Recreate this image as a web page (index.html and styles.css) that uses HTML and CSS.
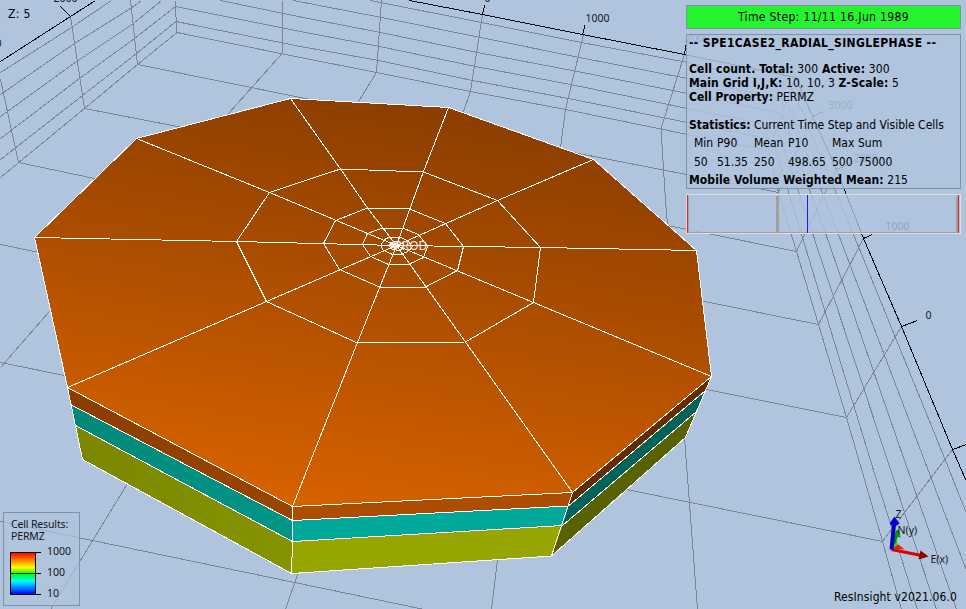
FILE: index.html
```html
<!DOCTYPE html>
<html lang="en">
<head>
<meta charset="utf-8">
<title>ResInsight</title>
<link rel="stylesheet" href="styles.css">
</head>
<body>
<main class="view">
<svg class="scene" width="966" height="609" viewBox="0 0 966 609">
  <defs>
    <linearGradient id="top" gradientUnits="userSpaceOnUse" x1="440" y1="105" x2="370" y2="510">
      <stop offset="0" stop-color="#8b3e00"/><stop offset=".37" stop-color="#a54a00"/><stop offset="1" stop-color="#d56100"/>
    </linearGradient>
    <linearGradient id="olive" x1="0" y1="0" x2="1" y2="0"><stop offset="0" stop-color="#7c8600"/><stop offset="1" stop-color="#859400"/></linearGradient>
    <linearGradient id="rust" x1="0" y1="0" x2="1" y2="0"><stop offset="0" stop-color="#8b3d00"/><stop offset="1" stop-color="#9a4500"/></linearGradient>
    <linearGradient id="teal" x1="0" y1="0" x2="1" y2="0"><stop offset="0" stop-color="#008878"/><stop offset="1" stop-color="#009688"/></linearGradient>
  </defs>
  <g transform="translate(.5 .5)">
  <g class="grid">
    <path d="M0 72L71 27L111 0M0 94L74 43L131.500 7L141 0M0 116L76 61L133 23L161 0M0 138L79 78L134 38L175 6M0 159L82 95L136 53L175.500 21M0 177L84 108L137 64L176.500 32"/>
    <path d="M0 79L18 162M70 16L84 108M130 0L137 64M174.500 0L176.500 32"/>
    <path d="M370 0L481 22L581 42L687 62L791 86M293 0L381 17L480 37L579 57L687 78L786 100M220 0L300 16.500L380 32L477 52L577 71L687 93L781 113M175 6L300 31L379 46L475 66L575 85L687 108L776 126M175.500 21L300 46L378 60L472 80L568 98L687 122L772 139M176.500 32L300 57L376 72L470 91L565 109L687 134L768 150"/>
    <path d="M281.500 0V53L229 112L48 312L0 367M381 0L376 72L358 101L127 483L50 609M482 14L470 91L463 111L297 574L285 609M583 34L565 109L560 147L497 559L491 609M684 54L660.500 128L665 200L684 437L697 609"/>
    <path d="M137 64L300 97L573 152L778 192M84 108L177 126L796 251M18 162L94 178L818 324M0 244L706 389L846 417M0 362L626 489L882 541M0 521L92 540L294 582L424 609"/>
    <path d="M795 77L768 150L778 192L796 251L818 324L846 417L882 541L901 609M772 139L801 234L870 460L917 609M776 126L812.500 234L887 460L936 609M781 113L825.500 234L904 460L956 609M786 100L838 234L924 460L966 570M791 86L853 234L945 460L966 513"/>
    <path d="M812 116L778 192M836 169L796 251M863 238L818 324M901 326L846 417M952 449L882 541"/>
  </g>
  <g class="axis">
    <path d="M0 61L70 16L95 0M60 6L70 16M409 0L482 14L582 34L684 54L795 77M482 14L484 5M582 34L584.500 25M684 54L686 41M795 77L812 116L836 169L863 238L901 326L952 449L966 481M812 116L823 111M836 169L846 165M863 238L872 234M901 326L917 320M952 449L966 444"/>
  </g>
  <g class="tick">
    <text x="53" y="1">2000</text><text x="-5" y="46">0</text><text x="484" y="1">0</text>
    <text x="585" y="21">1000</text><text x="685" y="41">2000</text>
    <text x="828" y="108">3000</text><text x="853" y="161">2000</text><text x="885" y="229">1000</text><text x="925" y="318">0</text>
  </g>
  <polygon fill="url(#rust)" points="67,387 292,506 292,520 70,404"/>
  <polygon fill="url(#teal)" points="70,404 292,520 292,541 75,425"/>
  <polygon fill="url(#olive)" points="75,425 292,541 291,573 82,459"/>
  <polygon fill="#ad4d00" points="292,506 572,492 568,505.500 292,520"/>
  <polygon fill="#00a99a" points="292,520 568,505.500 562,525 292,541"/>
  <polygon fill="#96a500" points="292,541 562,525 551,555.500 291,573"/>
  <polygon fill="#642c00" points="572,492 711,376 705,390 568,505.500"/>
  <polygon fill="#00635a" points="568,505.500 705,390 696,411 562,525"/>
  <polygon fill="#596200" points="562,525 696,411 685,437 551,555.500"/>
  <polygon fill="url(#top)" points="290,98 448,107 593,159 696,250 711,376 572,492 292,506 67,387 34,237 136,138"/>
  <g class="mesh">
    <polygon points="290,98 448,107 593,159 696,250 711,376 572,492 292,506 67,387 34,237 136,138"/>
    <polygon points="340,168.500 423,171.500 497,200 540,247 533,302 465,341.500 357,342.500 266,301 236,241 269,192"/>
    <polygon points="367,207.500 409,208.500 445,223 463,246 457,270 425,286.500 379,286.500 339,269 323,243 335,220"/>
    <polygon points="382,227.500 402,227.500 418,234 427,246 423,257 409,263.500 387,263.500 370,256 362,244 367,233"/>
    <polygon points="389,236.500 399,236.500 407,240 412,246 408,251 401,253.500 391,253.500 383,250 380,245 384,239"/>
    <polygon points="393,241 398,241 403,244 402,248 398,250 392,249 388,245"/>
    <path d="M290 98L340 168.500L367 207.500L396 245L465 341.500L572 492M448 107L423 171L396 245L357 342L292 506M593 159L497 200L396 245L266 301L67 387M696 250L540 247L396 245L236 241L34 237M711 376L533 302L396 245L269 192L136 138"/>
    <path d="M70 404L292 520L568 505.500L705 390M75 425L292 541L562 525L696 411M67 387L82 459L291 573L551 555.500L685 437L711 376M292 506V541L291 573M572 492L551 555.500"/>
  </g>
  <text class="well" x="394" y="249.500">PROD</text>
  <path fill="#f4f1ea" d="M390 243h2v-1h2v2h2v-2h2v3h-1v3h-2v1h-2v-2h-3z"/>
  <g>
    <path d="M893 546L897 530" stroke="#008500" stroke-width="3"/><path fill="#009b00" d="M894 536L898 528L900 537Z"/>
    <path fill="#00ee20" d="M891 548L896 541L899 547Z"/>
    <path fill="#fa1414" d="M892 548L898 544L904 549Z"/>
    <path d="M891 549L921 555" stroke="#dc0000" stroke-width="3"/><path fill="#880000" d="M920 550L928 556L918 559Z"/>
    <path d="M891 549L893.500 524" stroke="#0000bd" stroke-width="4"/><path fill="#0000d0" d="M894 516L899 523Q894 528 889 523Z"/>
    <g class="tick"><text x="895" y="517">Z</text><text x="897" y="533">N(y)</text><text x="930" y="562">E(x)</text></g>
  </g>
  </g>
</svg>
<div class="zscale">Z: 5</div>
<aside class="side">
  <div class="step">Time Step: 11/11 16.Jun 1989</div>
  <section class="info">
    <h1>-- SPE1CASE2_RADIAL_SINGLEPHASE --</h1>
    <p class="count"><b>Cell count. Total:</b> 300 <b>Active:</b> 300</p>
    <p class="dims"><b>Main Grid I,J,K:</b> 10, 10, 3 <b>Z-Scale:</b> 5</p>
    <p><b>Cell Property:</b> PERMZ</p>
    <p class="gap"><b>Statistics:</b> Current Time Step and Visible Cells</p>
    <div class="stats">
      <span>Min</span><span>P90</span><span>Mean</span><span>P10</span><span>Max</span><span>Sum</span>
      <span>50</span><span>51.35</span><span>250</span><span>498.65</span><span>500</span><span>75000</span>
    </div>
    <p class="mean"><b>Mobile Volume Weighted Mean:</b> 215</p>
  </section>
  <svg class="hist" width="275" height="40" viewBox="0 0 275 40">
    <rect class="plot" x=".5" y=".5" width="274" height="39"/>
    <path fill="#a0a09e" d="M2 2h1v36H2zM90 2h3v36h-3zM270 2h3v36h-3zM2 38h271v1H2z"/>
    <path fill="#ef1f24" d="M1 1h1v38H1zM272 1h1v38h-1z"/><path fill="#1c1cff" d="M121 1h1v38h-1z"/>
  </svg>
</aside>
<section class="legend">
  <div class="title">Cell Results:<br>PERMZ</div>
  <div class="scale">
    <svg width="31" height="44" viewBox="0 0 31 44">
      <defs><linearGradient id="ramp" x1="0" y1="0" x2="0" y2="1"><stop offset="0" stop-color="#f00"/><stop offset=".06" stop-color="#ff2800"/><stop offset=".36" stop-color="#ff0"/><stop offset=".5" stop-color="#0f0"/><stop offset=".68" stop-color="#0ff"/><stop offset="1" stop-color="#00f"/></linearGradient></defs>
      <rect x=".5" y=".5" width="25" height="42" fill="url(#ramp)"/>
      <path d="M31 .5H.5V42.500H31M25.500 .5V42.500M0 21.500H31" fill="none" stroke="#000"/>
    </svg>
    <ul><li>1000</li><li>100</li><li>10</li></ul>
  </div>
</section>
<div class="version">ResInsight v2021.06.0</div>
</main>
</body>
</html>
```
FILE: styles.css
```css
* { box-sizing: border-box; }
body { margin: 0; background: #b0c4de; color: #000; font: 12px/14px "DejaVu Sans Condensed", "DejaVu Sans", sans-serif; }
.view { position: relative; width: 966px; height: 609px; overflow: hidden; background: #b0c4de; }
.scene { position: absolute; inset: 0; }
.scene .grid { fill: none; stroke: #778799; stroke-width: 1; shape-rendering: crispEdges; }
.axis { fill: none; stroke: #000; shape-rendering: crispEdges; }
.mesh { fill: none; stroke: #fff; shape-rendering: crispEdges; }
.tick { font: 10.5px "Noto Sans", sans-serif; fill: #15191f; }
.well { font: 12px "Noto Sans", sans-serif; fill: #f3eae2; }
.zscale { position: absolute; left: 8px; top: 7px; letter-spacing: .35px; }
.version { position: absolute; right: 9px; bottom: 5px; white-space: nowrap; letter-spacing: .12px; }
.side { position: absolute; left: 686px; top: 5px; width: 275px; display: flex; flex-direction: column; gap: 5px; }
.step { height: 24px; border: 1px solid #8191a6; background: #24f52c; text-align: center; line-height: 23px; letter-spacing: .36px; }
.info { height: 155px; border: 1px solid #8191a6; background: rgba(176, 196, 222, .85); padding: 1px 2px; white-space: nowrap; }
.info h1 { margin: 0; font-size: 12px; line-height: 14px; letter-spacing: .36px; }
.info p { margin: 0; }
.info .gap { margin-top: 14px; }
.info .count { margin-top: 12px; letter-spacing: .14px; }
.info .dims { letter-spacing: .12px; }
.info .mean { margin-top: 1px; letter-spacing: .08px; }
.stats { display: grid; grid-template-columns: 23px 37px 34px 44px 26px auto; line-height: 19px; padding: 2px 0 0 5px; }
.hist { display: block; }
.plot { fill: rgba(176, 196, 222, .8); stroke: #dedede; }
.legend { position: absolute; left: 3px; top: 512px; width: 77px; height: 94px; border: 1px solid #8191a6; background: rgba(176, 196, 222, .7); padding: 5px 0 0 7px; font: 10.5px/12px "Noto Sans", sans-serif; white-space: nowrap; color: #11161c; }
.title { letter-spacing: -.15px; }
.scale { display: flex; gap: 6px; margin: 10px 0 0 -1px; }
.scale ul { list-style: none; margin: -11px 0 0; padding: 0; line-height: 21px; }
```
